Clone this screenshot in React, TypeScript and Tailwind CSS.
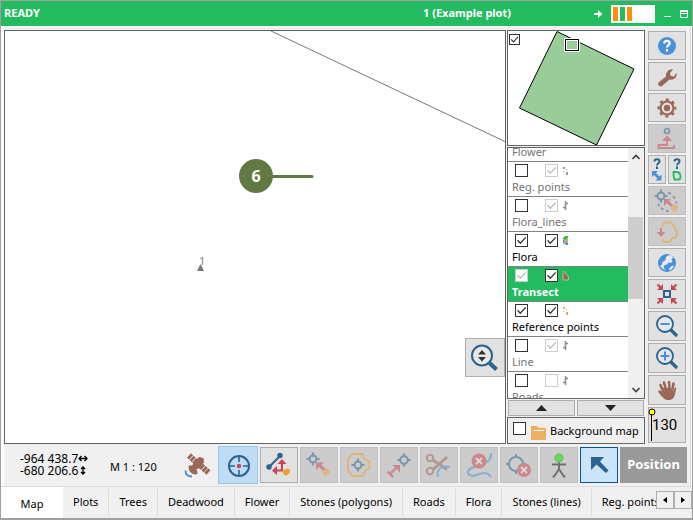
import type { ReactNode } from 'react'

type Layer = {
  name: string
  shown: boolean
  labelled: boolean
  lockShown?: boolean
  lockLabel?: boolean
  selected?: boolean
  symbol: ReactNode
}

const BLUE = '#28648f'
const SKY = '#4a90d9'
const BROWN = '#9a6856'
const RED = '#cc4452'
const ORANGE = '#f0a030'

const edge = 'border border-[#adadad] bg-[#e1e1e1]'
const edgeOff = 'border border-[#bfbfbf] bg-[#cccccc]'

function Check({ label, on, disabled, small }: { label: string; on: boolean; disabled?: boolean; small?: boolean }) {
  return (
    <span className={`relative block shrink-0 ${small ? 'size-[11px]' : 'size-[13px]'}`}>
      <input
        type="checkbox"
        aria-label={label}
        defaultChecked={on}
        disabled={disabled}
        className="peer block size-full appearance-none border border-[#333] bg-white disabled:border-[#ccc]"
      />
      <svg
        viewBox="0 0 13 13"
        className="pointer-events-none absolute inset-0 hidden size-full text-[#333] peer-checked:block peer-disabled:text-[#bbb]"
      >
        <path d="M2.500 6.300l2.800 3L10.700 3.400" fill="none" stroke="currentColor" strokeWidth="1.300" />
      </svg>
    </span>
  )
}

/* レイヤー記号 */
function Dots({ color }: { color: string }) {
  return (
    <svg width="8" height="11" viewBox="0 0 8 11" fill={color} className="block">
      <path d="M1 2h2v2H1zM4 4h1v1H4zM1 6h1v1H1zM4 7h2v3H4z" />
    </svg>
  )
}

function Stroke() {
  return (
    <svg width="8" height="11" viewBox="0 0 8 11" className="block">
      <path d="M1 7.500h3M3.500 1v9M3 3.500h3" fill="none" stroke="#8c8c8c" strokeWidth="1.500" />
    </svg>
  )
}

const layers: Layer[] = [
  { name: 'Flower', shown: false, labelled: true, lockLabel: true, symbol: <Dots color="#999" /> },
  { name: 'Reg. points', shown: false, labelled: true, lockLabel: true, symbol: <Dots color="#999" /> },
  { name: 'Flora_lines', shown: false, labelled: true, lockLabel: true, symbol: <Stroke /> },
  {
    name: 'Flora',
    shown: true,
    labelled: true,
    symbol: (
      <svg width="8" height="11" viewBox="0 0 8 11" className="block">
        <path d="M1 3l2-2h3v3L3 5 1 4z" fill="#22bb60" />
        <path d="M1 4l2 2-1 3-1-1z" fill={SKY} />
        <path d="M2 6l4-4v6z" fill={ORANGE} />
        <path d="M2 8l2-1 2 1v2H4z" fill={SKY} />
      </svg>
    ),
  },
  {
    name: 'Transect',
    shown: true,
    labelled: true,
    lockShown: true,
    selected: true,
    symbol: (
      <svg width="8" height="11" viewBox="0 0 8 11" className="block">
        <path d="M1 1.500h1L6.500 7v3H1z" fill={BROWN} stroke="#d8c0b0" strokeWidth="0.800" />
      </svg>
    ),
  },
  { name: 'Reference points', shown: true, labelled: true, symbol: <Dots color="#eba94f" /> },
  { name: 'Line', shown: false, labelled: true, lockLabel: true, symbol: <Stroke /> },
  { name: 'Roads', shown: false, labelled: false, lockLabel: true, symbol: <Stroke /> },
]

function LayerRow({ layer }: { layer: Layer }) {
  const tone = layer.selected
    ? 'bg-[#22bb60] font-bold text-white'
    : layer.shown
      ? 'text-black'
      : 'text-[#737373]'
  return (
    <li className={`h-[35px] border-b border-[#828282] pt-[2px] ${tone}`}>
      <div className="flex h-[13px] items-center pl-[7px]">
        <Check label={`${layer.name} visible`} on={layer.shown} disabled={layer.lockShown} />
        <span className="w-[17px]" />
        <Check label={`${layer.name} labels`} on={layer.labelled} disabled={layer.lockLabel} />
        <span className="ml-1">{layer.symbol}</span>
      </div>
      <div className="pl-1 leading-[19px]">{layer.name}</div>
    </li>
  )
}

/* アイコン */
function Icon({ children, size = 28 }: { children: ReactNode; size?: 28 | 14 }) {
  return (
    <svg width={size} height="28" viewBox={`0 0 ${size} 28`} fill="none" className="block shrink-0">
      {children}
    </svg>
  )
}

function Target({ x, y, r }: { x: number; y: number; r: number }) {
  return (
    <g stroke={BLUE} strokeWidth="2">
      <circle cx={x} cy={y} r={r} />
      <path
        d={`M${x} ${y - r - 3}v4M${x} ${y + r - 1}v4M${x - r - 3} ${y}h4M${x + r - 1} ${y}h4`}
      />
    </g>
  )
}

const Help = () => (
  <Icon>
    <circle cx="14" cy="14" r="9" fill={SKY} />
    <path d="M11.300 11.500c0-3.500 5.400-3.200 5.400-.4 0 2-2.700 2-2.700 4.400M14 17v2.500" stroke="#fff" strokeWidth="2.200" />
  </Icon>
)

const Wrench = () => (
  <Icon>
    <path
      d="M5.500 19.500l7.500-6c-.5-4 3-8 7-7l-3 3.500.8 3 3 .6L23.500 10c1 4-2.500 7.500-7 6.500L9 23c-2.200 1.500-5-1.500-3.500-3.500z"
      fill={BROWN}
    />
  </Icon>
)

const Gear = () => (
  <Icon>
    <circle cx="14" cy="14" r="6.500" stroke={BROWN} strokeWidth="2.200" />
    <circle cx="14" cy="14" r="8.300" stroke={BROWN} strokeWidth="2.200" strokeDasharray="3.200 3.320" strokeDashoffset="1.600" />
    <circle cx="14" cy="14" r="3.200" fill={BROWN} />
  </Icon>
)

const StepUp = () => (
  <Icon>
    <circle cx="14" cy="6" r="2.500" stroke={BLUE} strokeWidth="1.700" />
    <path d="M14 13v7H5.500v3H21v-3" stroke={RED} strokeWidth="1.800" />
    <path d="M9 16l5-5.500 5 5.500z" fill={RED} />
  </Icon>
)

const HelpMark = () => <path d="M4.500 5.500c0-3 5-3 5 0 0 2-2.500 1.500-2.500 4M7 10.500V13" stroke={BLUE} strokeWidth="2" />

const HelpArrow = () => (
  <Icon size={14}>
    <HelpMark />
    <path d="M2 15h6l-2 2 3.500 3.500 2-2v6h-6l2-2L4 19l-2 2z" fill={SKY} />
  </Icon>
)

const HelpDraw = () => (
  <Icon size={14}>
    <HelpMark />
    <path d="M3.500 16H6c3 0 4.500 2 4.500 4.500 0 2-.5 3-2 3H4.500c-1-2-1-5-1-7.500z" stroke="#22bb60" strokeWidth="1.800" />
  </Icon>
)

const Drop = () => <path d="M18 19.500l4-2 3 1-.5 3.500-3.500 3-3-2.500z" fill={ORANGE} />

const SnapDots = () => (
  <Icon>
    <Target x={8} y={9} r={3.5} />
    <path d="M11 12h7l-2 2 4 4-2 2-4-4-3 3z" fill={RED} />
    <path d="M15 5.500l3 1.500M20 9l2 2.500M23 14.500l.8 2M5 17l1.500 2M8 21l2.500 1.500M13 24h2.500" stroke={BLUE} strokeWidth="1.800" />
    <Drop />
  </Icon>
)

const LoopDown = () => (
  <Icon>
    <path
      d="M9 9l1.500-4L17 4l4.500 4v3l2.500 3-1 5-4 1.500-2.500 3.500h-5L9 21"
      stroke={ORANGE}
      strokeWidth="2"
      strokeLinejoin="round"
    />
    <path d="M8 10v6" stroke={RED} strokeWidth="2" />
    <path d="M3.500 14h9L8 19z" fill={RED} />
  </Icon>
)

const Globe = () => (
  <Icon>
    <circle cx="14" cy="14" r="9" fill={SKY} />
    <path
      d="M15 6.500l3-.5 2.500 2.500-2 1.500 1 2.500-2 1.500-2-.5-1.500 2-2.500.5-1 2.500 2 2.500-2.500-1L7 17l2-1.500.5-2.500 3-2 .5-3zM18 17.500l2-1 1 .5-2 3-2.500 1.500-.5-1.500z"
      fill="#e6ebf0"
    />
  </Icon>
)

const ZoomFit = () => (
  <Icon>
    <rect x="11" y="11" width="6" height="6" stroke={BLUE} strokeWidth="2" />
    <path d="M4.500 4.500L9 9M23.500 4.500L19 9M4.500 23.500L9 19M23.500 23.500L19 19" stroke={RED} strokeWidth="2.200" />
    <path d="M4 10h6V4zM24 10h-6V4zM4 18h6v6zM24 18h-6v6z" fill={RED} />
  </Icon>
)

function Lens({ children }: { children: ReactNode }) {
  return (
    <Icon>
      <circle cx="12" cy="12" r="8" stroke={BLUE} strokeWidth="1.800" fill="#e6e8ea" />
      <path d="M17.500 17.500l6.500 6.500" stroke={BLUE} strokeWidth="3.200" />
      {children}
    </Icon>
  )
}

const ZoomOut = () => (
  <Lens>
    <path d="M7.500 12h9" stroke={SKY} strokeWidth="2" />
  </Lens>
)

const ZoomIn = () => (
  <Lens>
    <path d="M7.500 12h9M12 7.500v9" stroke={SKY} strokeWidth="2" />
  </Lens>
)

const Hand = () => (
  <Icon>
    <path
      d="M9 13L7.500 9M12.500 12L11 6.500M16.500 12l-.5-6M19.500 13l1-5.500M9.500 19.500l-3-4"
      stroke={BROWN}
      strokeWidth="2.600"
      strokeLinecap="round"
    />
    <path d="M22 11.500c1.500-.5 1.500 1 1 2-1 4-1 10-6.500 10.500-5 .5-7-2-8.500-6.500l1-6 9 .5 2 3z" fill={BROWN} />
  </Icon>
)

const Satellite = () => (
  <Icon>
    <path d="M11.500 11L16 6l4.500 1 .5 4.500-5 6-5 1-2.500-3z" fill={BROWN} />
    <path d="M6 4.500l7 6.500M18 15l8 7" stroke={BROWN} strokeWidth="6" strokeDasharray="2.800 0.700" />
    <path d="M6 14.500c3-1 9 3 8.500 8.500-4.500 2-10.500-3-8.500-8.500z" fill={BROWN} />
    <path d="M2.500 19.500c0 4 2 6 6.500 6" stroke={SKY} strokeWidth="1.800" />
  </Icon>
)

const Crosshair = () => (
  <Icon>
    <circle cx="15" cy="15" r="10" stroke={BLUE} strokeWidth="2" />
    <path d="M15 5v6M15 19v6M5 15h6M19 15h6" stroke={BLUE} strokeWidth="1.600" />
    <circle cx="15" cy="15" r="2.200" fill={RED} />
  </Icon>
)

const MoveVertex = () => (
  <Icon>
    <path d="M4 16L15 5" stroke={BLUE} strokeWidth="2" />
    <circle cx="4" cy="16" r="2.700" fill={BLUE} />
    <circle cx="15" cy="4.500" r="2.700" fill={BLUE} />
    <path d="M17 11v8.500h-6" stroke={RED} strokeWidth="2" />
    <path d="M12.500 13L17 8l4.500 5zM12 15v9l-5-4.500z" fill={RED} />
    <Drop />
  </Icon>
)

const SnapPoint = () => (
  <Icon>
    <Target x={8} y={8} r={3.5} />
    <path d="M11 11.500h8l-2.500 2.500 4 4-2.500 2-4-4L11 19z" fill={RED} />
    <Drop />
  </Icon>
)

const LoopTarget = () => (
  <Icon>
    <path d="M8 3h9l2.500 5 5 2.500V17L21 19l-3.500 6H8l-5-5V8z" stroke={ORANGE} strokeWidth="2" strokeLinejoin="round" />
    <Target x={13} y={14} r={3.5} />
  </Icon>
)

const Offset = () => (
  <Icon>
    <Target x={19} y={9} r={3.8} />
    <path d="M5 23l7-7M2.500 20.500l5.500 5.500" stroke={RED} strokeWidth="2.400" />
    <path d="M7.500 14H15v7.500z" fill={RED} />
  </Icon>
)

const Scissors = () => (
  <Icon>
    <circle cx="5" cy="7" r="3.200" stroke={BROWN} strokeWidth="2" />
    <circle cx="5" cy="20" r="3.200" stroke={BROWN} strokeWidth="2" />
    <path d="M8 9l14 9.500M8 18.500L22 6" stroke={BROWN} strokeWidth="2.800" />
    <path d="M13 26c-2-7 3-12 12-10" stroke={SKY} strokeWidth="2" />
  </Icon>
)

function Cross({ x, y, r }: { x: number; y: number; r: number }) {
  return (
    <g>
      <circle cx={x} cy={y} r={r} fill={RED} />
      <path d={`M${x - 3} ${y - 3}l6 6M${x + 3} ${y - 3}l-6 6`} stroke="#e6e6e6" strokeWidth="1.800" />
    </g>
  )
}

const DeleteLine = () => (
  <Icon>
    <path d="M26 2c1 8-6 10-11 12S2 17 3 22c2 5 8 2 13 .5s8 .5 10 3.500" stroke={SKY} strokeWidth="2" />
    <Cross x={14} y={10} r={7.5} />
  </Icon>
)

const DeletePoint = () => (
  <Icon>
    <Target x={11} y={13} r={7} />
    <Cross x={19} y={19} r={7} />
  </Icon>
)

const Person = () => (
  <Icon>
    <path d="M14 11v8M7 13.500h14M14 18l-5 7.500H7.500M14 18l5 7.500h1.500" stroke="#707070" strokeWidth="2" />
    <circle cx="14" cy="7" r="4.200" fill="#5be04f" stroke="#8a9a80" strokeWidth="0.800" />
  </Icon>
)

const Pointer = () => (
  <Icon>
    <path d="M6 6h13l-4 4.500 8.500 9-2.500 2.500-9.500-8.500L6 19z" fill={BLUE} />
  </Icon>
)

const Elevation = () => (
  <svg width="30" height="30" viewBox="0 0 30 30" fill="none">
    <circle cx="12" cy="12.500" r="10" stroke={BLUE} strokeWidth="2" fill="#e8e8e8" />
    <path d="M19.500 20l7 6.500" stroke={BLUE} strokeWidth="4" />
    <path d="M8 11.500L12 7l4 4.500zM8 14l4 4.500 4-4.500z" fill="#333" />
  </svg>
)

type Tool = { label: string; icon: ReactNode; off?: boolean }

const shortTools: Tool[] = [
  { label: 'Help', icon: <Help /> },
  { label: 'Tools', icon: <Wrench /> },
  { label: 'Settings', icon: <Gear /> },
  { label: 'Step up', icon: <StepUp />, off: true },
]

const snapTools: Tool[] = [
  { label: 'Snap to vertices', icon: <SnapDots />, off: true },
  { label: 'Close loop', icon: <LoopDown />, off: true },
  { label: 'World', icon: <Globe /> },
]

const viewTools: Tool[] = [
  { label: 'Zoom to extent', icon: <ZoomFit /> },
  { label: 'Zoom out', icon: <ZoomOut /> },
  { label: 'Zoom in', icon: <ZoomIn /> },
  { label: 'Pan', icon: <Hand /> },
]

const editTools: Tool[] = [
  { label: 'Move vertex', icon: <MoveVertex /> },
  { label: 'Snap to point', icon: <SnapPoint />, off: true },
  { label: 'Loop target', icon: <LoopTarget />, off: true },
  { label: 'Offset point', icon: <Offset />, off: true },
  { label: 'Cut line', icon: <Scissors />, off: true },
  { label: 'Delete line', icon: <DeleteLine />, off: true },
  { label: 'Delete point', icon: <DeletePoint />, off: true },
]

const tabs = ['Plots', 'Trees', 'Deadwood', 'Flower', 'Stones (polygons)', 'Roads', 'Flora', 'Stones (lines)', 'Reg. points']

function ToolButton({ tool, height }: { tool: Tool; height: string }) {
  return (
    <button
      type="button"
      aria-label={tool.label}
      disabled={tool.off}
      className={`flex w-[38px] shrink-0 items-center justify-center ${height} ${tool.off ? edgeOff : edge}`}
    >
      <span className={tool.off ? 'opacity-50' : ''}>{tool.icon}</span>
    </button>
  )
}

function TitleBar() {
  return (
    <header className="flex h-[25px] shrink-0 items-center bg-[#22bb60] pr-1 pl-[3px] font-bold text-white">
      <span>READY</span>
      <span className="ml-auto">1 (Example plot)</span>
      <svg width="10" height="10" viewBox="0 0 10 10" className="mr-2 ml-[82px]">
        <path d="M1 5h5" stroke="#fff" strokeWidth="2" />
        <path d="M5 1l4.500 4L5 9z" fill="#fff" />
      </svg>
      <div className="flex h-[18px] w-11 gap-[2px] bg-white p-[2px]">
        <span className="w-[5px] bg-[#ff8c0a]" />
        <span className="w-[5px] bg-[#22bb60]" />
        <span className="w-[5px] bg-[#ff8c0a]" />
      </div>
      <button type="button" aria-label="Minimize" className="ml-2">
        <svg width="9" height="9" viewBox="0 0 9 9">
          <path d="M1 7.500h7" stroke="#fff" />
        </svg>
      </button>
      <button type="button" aria-label="Maximize" className="ml-2">
        <svg width="8" height="8" viewBox="0 0 8 8" fill="none" stroke="#fff">
          <path d="M0.500 0.500h7v7h-7zM0 1.500h8M0 3.500h8" />
        </svg>
      </button>
    </header>
  )
}

function MapView() {
  return (
    <div className="relative min-w-0 flex-1 overflow-hidden border border-[#646464] bg-white">
      <svg width="100%" height="100%" className="block">
        <path d="M266 0L502 111.500" stroke="#777" strokeWidth="1" />
        <path d="M266 145.500h41" stroke="#607a42" strokeWidth="3" strokeLinecap="round" />
        <circle cx="251" cy="145" r="17" fill="#607a42" />
        <text x="251" y="151" textAnchor="middle" fontSize="16" fontWeight="bold" fill="#fff">
          6
        </text>
        <text x="194" y="234" fontSize="11" fill="#777">
          1
        </text>
        <path d="M192 240l3.500-7 3.500 7z" fill="#777" />
      </svg>
      <button
        type="button"
        aria-label="Zoom to elevation"
        className={`absolute right-0 bottom-[66px] flex h-[39px] w-[40px] items-center justify-center ${edge}`}
      >
        <Elevation />
      </button>
    </div>
  )
}

function LayerPanel() {
  return (
    <aside className="flex w-[138px] shrink-0 flex-col">
      <div className="relative h-[116px] shrink-0 border border-[#646464] bg-white">
        <svg width="136" height="114" viewBox="0 0 136 114" className="block">
          <path d="M49 0.500L126 38 88.500 114 11.500 77z" fill="#99cc99" stroke="#000" />
          <rect x="56.500" y="7.500" width="15" height="13" fill="#99cc99" stroke="#fff" />
          <rect x="57.500" y="8.500" width="13" height="11" fill="none" stroke="#000" />
          <rect x="58.500" y="9.500" width="11" height="9" fill="none" stroke="#fff" />
        </svg>
        <div className="absolute top-[3px] left-[1px]">
          <Check label="Overview map" on small />
        </div>
      </div>
      <div className="mt-px flex min-h-0 flex-1 overflow-hidden border border-[#646464] bg-white">
        <ul className="-mt-[21px] min-w-0 flex-1">
          {layers.map((layer) => (
            <LayerRow key={layer.name} layer={layer} />
          ))}
        </ul>
        <div className="flex w-4 shrink-0 flex-col items-center bg-[#f0f0f0]">
          <svg width="8" height="16" viewBox="0 0 8 16" className="shrink-0">
            <path d="M0.500 11L4 7.500 7.500 11" fill="none" stroke="#444" strokeWidth="1.600" />
          </svg>
          <div className="mt-[53px] h-[82px] w-[15px] self-start bg-[#cdcdcd]" />
          <svg width="8" height="16" viewBox="0 0 8 16" className="mt-auto shrink-0">
            <path d="M0.500 6L4 9.500 7.500 6" fill="none" stroke="#444" strokeWidth="1.600" />
          </svg>
        </div>
      </div>
      <div className="flex shrink-0 gap-[2px] px-px pt-px pb-px">
        <button type="button" aria-label="Move up" className={`flex h-4 flex-1 items-center justify-center ${edge}`}>
          <svg width="11" height="6" viewBox="0 0 11 6">
            <path d="M0 6l5.500-6L11 6z" fill="#222" />
          </svg>
        </button>
        <button type="button" aria-label="Move down" className={`flex h-4 flex-1 items-center justify-center ${edge}`}>
          <svg width="11" height="6" viewBox="0 0 11 6">
            <path d="M0 0l5.500 6L11 0z" fill="#222" />
          </svg>
        </button>
      </div>
      <div className="flex h-[27px] shrink-0 items-center border border-[#646464] pl-[5px] whitespace-nowrap">
        <span className="-mt-1">
          <Check label="Background map" on={false} />
        </span>
        <svg width="16" height="14" viewBox="0 0 16 14" className="mt-1 mr-[3px] ml-[5px] shrink-0">
          <path d="M0 0h6l2 2h7v12H0z" fill="#eeb060" />
          <path d="M3 4.500h10" stroke="#fff" strokeWidth="1" />
        </svg>
        <span className="mt-[2px]">Background map</span>
      </div>
    </aside>
  )
}

function SideTools() {
  return (
    <nav className="ml-[3px] flex w-[38px] shrink-0 flex-col gap-[2px] pt-px">
      {shortTools.map((tool) => (
        <ToolButton key={tool.label} tool={tool} height="h-[29px]" />
      ))}
      <div className="flex gap-[2px]">
        <button type="button" aria-label="What is this" className={`flex h-[29px] flex-1 items-center justify-center ${edge}`}>
          <HelpArrow />
        </button>
        <button type="button" aria-label="Drawing help" className={`flex h-[29px] flex-1 items-center justify-center ${edge}`}>
          <HelpDraw />
        </button>
      </div>
      {snapTools.map((tool) => (
        <ToolButton key={tool.label} tool={tool} height="h-[29px]" />
      ))}
      {viewTools.map((tool) => (
        <ToolButton key={tool.label} tool={tool} height="h-[30px]" />
      ))}
      <button type="button" className={`relative h-[36px] pl-[3px] text-left font-[Roboto,sans-serif] text-[15px] ${edge}`}>
        130
        <svg width="8" height="34" viewBox="0 0 8 34" className="absolute top-0 -left-px">
          <path d="M3.500 6v27" stroke="#000" />
          <circle cx="4" cy="4" r="3" fill="#ff0" stroke="#000" />
        </svg>
      </button>
    </nav>
  )
}

function StatusBar() {
  return (
    <div className="flex h-[42px] shrink-0 items-center gap-[2px] pb-[1px]">
      <div className="ml-4 w-[88px] text-[12px] leading-[12px] whitespace-nowrap">
        <div className="flex items-center">
          -964 438.7
          <svg width="10" height="7" viewBox="0 0 10 7">
            <path d="M1 3.500h8M3.500 1L1 3.500 3.500 6M6.500 1L9 3.500 6.500 6" fill="none" stroke="#000" strokeWidth="1.300" />
          </svg>
        </div>
        <div className="flex items-center">
          -680 206.6
          <svg width="10" height="9" viewBox="0 0 10 9">
            <path d="M5 1v7M3 3l2-2 2 2M3 6l2 2 2-2" fill="none" stroke="#000" strokeWidth="1.300" />
          </svg>
        </div>
      </div>
      <div className="mt-[5px] w-[66px] whitespace-nowrap">M 1 : 120</div>
      <div className="flex w-[38px] justify-center">
        <Satellite />
      </div>
      <button
        type="button"
        aria-label="Crosshair"
        className="flex h-[38px] w-[40px] shrink-0 items-center justify-center border border-[#90c8f6] bg-[#bfdcf3]"
      >
        <Crosshair />
      </button>
      {editTools.map((tool) => (
        <ToolButton key={tool.label} tool={tool} height="h-[36px]" />
      ))}
      <button type="button" aria-label="Person" className={`flex h-[36px] w-[38px] shrink-0 items-center justify-center ${edgeOff}`}>
        <Person />
      </button>
      <button
        type="button"
        aria-label="Select"
        className="flex h-[36px] w-[38px] shrink-0 items-center justify-center border border-[#00549c] bg-[#cce4f7]"
      >
        <Pointer />
      </button>
      <button type="button" className="mr-[3px] h-[36px] flex-1 bg-[#999] text-[13px] font-bold text-white">
        Position
      </button>
    </div>
  )
}

function TabBar() {
  return (
    <div role="tablist" className="flex h-[32px] shrink-0 border-t border-[#dcdcdc] bg-[#f0f0f0] whitespace-nowrap">
      <button type="button" role="tab" aria-selected="true" className="w-[62px] shrink-0 bg-white pt-1">
        Map
      </button>
      <div className="flex min-w-0 flex-1 overflow-hidden py-[2px]">
        {tabs.map((tab) => (
          <button key={tab} type="button" role="tab" aria-selected="false" className="shrink-0 border-r border-[#dcdcdc] px-[10px]">
            {tab}
          </button>
        ))}
      </div>
      <button type="button" aria-label="Previous tabs" className="mt-[4px] flex h-[18px] w-[18px] shrink-0 items-center justify-center border border-[#adadad] bg-[#f0f0f0]">
        <svg width="4" height="6" viewBox="0 0 4 6">
          <path d="M4 0v6L0 3z" />
        </svg>
      </button>
      <button type="button" aria-label="Next tabs" className="mt-[4px] flex h-[18px] w-[18px] shrink-0 items-center justify-center border border-[#adadad] bg-[#f0f0f0]">
        <svg width="4" height="6" viewBox="0 0 4 6">
          <path d="M0 0v6l4-3z" />
        </svg>
      </button>
    </div>
  )
}

export default function App() {
  return (
    <div className="flex h-screen flex-col border border-b-2 border-[#a0a0a0] bg-white font-['Noto_Sans','Open_Sans',sans-serif] text-[11px] text-black">
      <TitleBar />
      <div className="mt-px mr-px ml-[3px] flex min-h-0 flex-1 flex-col border-r border-[#dcdcdc] bg-[#f0f0f0]">
        <main className="flex min-h-0 flex-1 pt-[3px] pr-[4px]">
          <MapView />
          <div className="w-px shrink-0" />
          <LayerPanel />
          <SideTools />
        </main>
        <StatusBar />
      </div>
      <TabBar />
    </div>
  )
}
